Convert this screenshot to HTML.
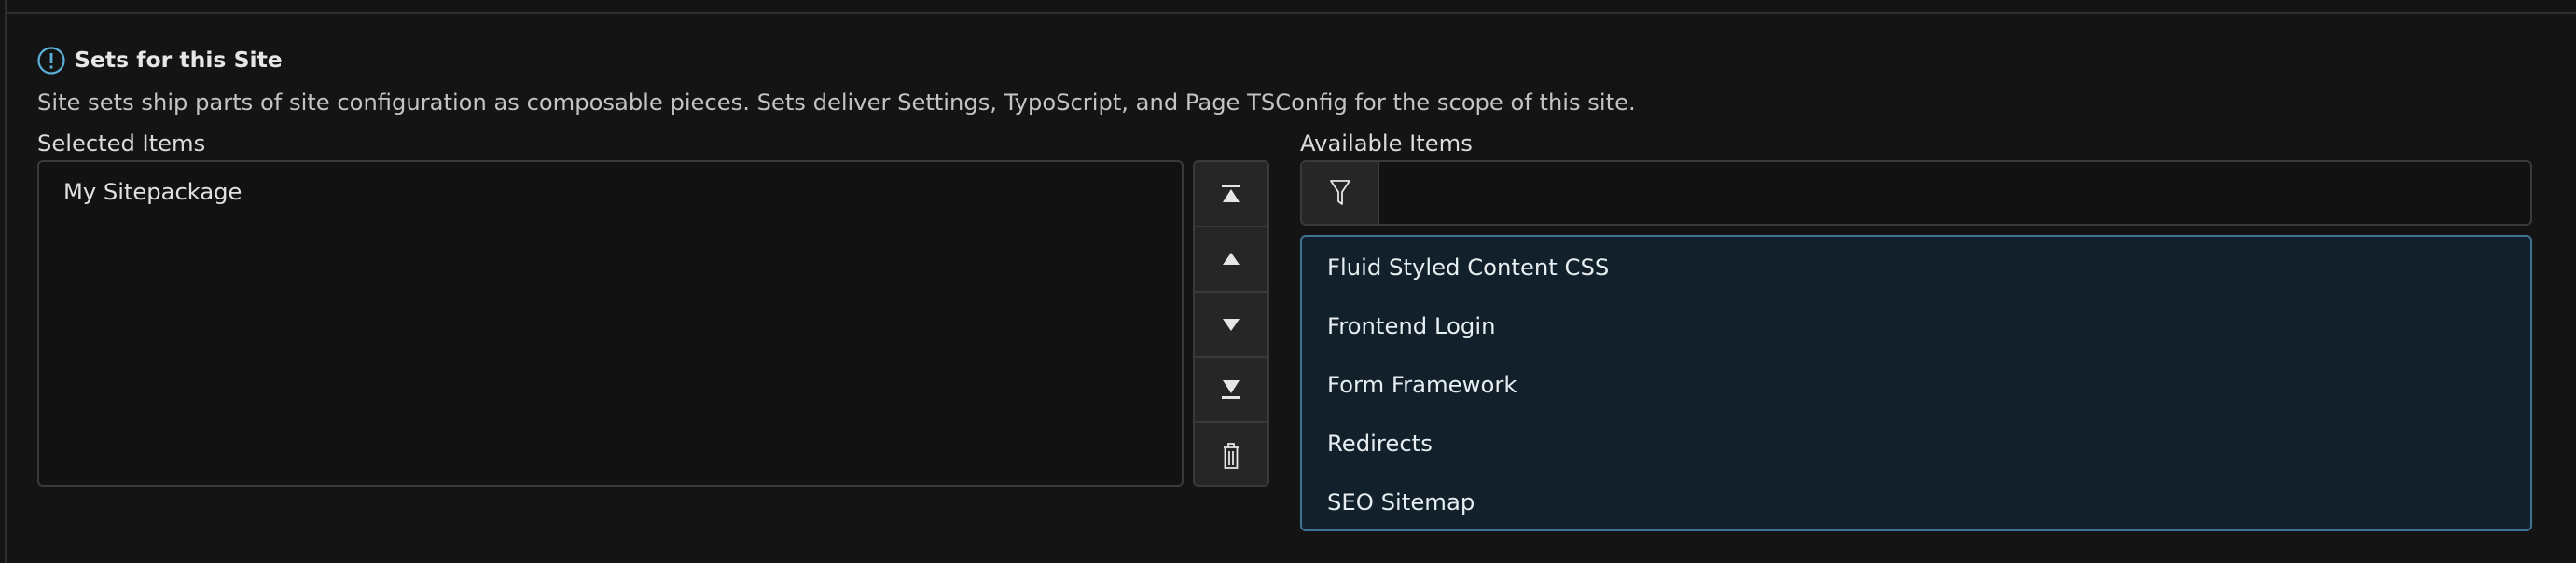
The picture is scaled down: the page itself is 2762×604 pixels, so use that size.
<!DOCTYPE html>
<html><head><style>
*{box-sizing:border-box;margin:0;padding:0}
body{width:2762px;height:604px;background:#141414;font-family:"DejaVu Sans","Liberation Sans",sans-serif;color:#d8d8d8;font-size:24.2px;position:relative;overflow:hidden}
.a{position:absolute}
.vl{left:5px;top:0;width:2px;height:604px;background:#2e2e2e}
.hl{left:5px;top:13px;width:2757px;height:2px;background:#2e2e2e}
.t{left:80px;top:50px;font-weight:bold;font-size:23.5px;color:#e6e6e6}
.d{left:40px;top:96px;color:#c4c4c4;white-space:nowrap}
.lb{top:140px;color:#dcdcdc}
.box{left:40px;top:172px;width:1229px;height:350px;border:2px solid #3a3a3a;border-radius:6px;background:#121212}
.btns{left:1279px;top:172px;width:82px;height:350px;border:2px solid #3a3a3a;border-radius:6px;background:#262626;overflow:hidden}
.btn{height:70px;border-bottom:2px solid #3a3a3a;display:flex;align-items:center;justify-content:center}
.btn:last-child{border-bottom:none}
.inp{left:1394px;top:172px;width:1321px;height:70px;border:2px solid #3a3a3a;border-radius:6px;background:#121212;overflow:hidden}
.fb{position:absolute;left:0;top:0;width:83px;height:100%;background:#262626;border-right:2px solid #3a3a3a;display:flex;align-items:center;justify-content:center}
.list{left:1394px;top:252px;width:1321px;height:318px;border:2px solid #3d7393;border-radius:6px;background:#11202a;color:#e6eef2}
.it{position:absolute;left:27px;font-size:24.3px}
</style></head><body>
<div class="a vl"></div><div class="a hl"></div>
<svg class="a" style="left:40px;top:50px" width="30" height="30" viewBox="0 0 30 30"><circle cx="15" cy="15" r="13.5" fill="none" stroke="#5ab0d8" stroke-width="2.2"/><rect x="13.6" y="7" width="2.8" height="11" fill="#5ab0d8"/><rect x="13.6" y="20.5" width="2.8" height="3" fill="#5ab0d8"/></svg>
<div class="a t">Sets for this Site</div>
<div class="a d">Site sets ship parts of site configuration as composable pieces. Sets deliver Settings, TypoScript, and Page TSConfig for the scope of this site.</div>
<div class="a lb" style="left:40px">Selected Items</div>
<div class="a lb" style="left:1394px">Available Items</div>
<div class="a box"><div style="position:absolute;left:26px;top:18px;color:#e0e0e0">My Sitepackage</div></div>
<div class="a btns">
<div class="btn"><svg width="22" height="22" viewBox="0 0 22 22"><rect x="1" y="1" width="20" height="3" fill="#e6e6e6"/><path d="M11 6 L20 20 L2 20Z" fill="#e6e6e6"/></svg></div>
<div class="btn"><svg width="22" height="16" viewBox="0 0 22 16"><path d="M11 1 L20 14 L2 14Z" fill="#e6e6e6"/></svg></div>
<div class="btn"><svg width="22" height="16" viewBox="0 0 22 16"><path d="M2 2 L20 2 L11 15Z" fill="#e6e6e6"/></svg></div>
<div class="btn"><svg width="22" height="22" viewBox="0 0 22 22"><path d="M2 1 L20 1 L11 15Z" fill="#e6e6e6"/><rect x="1" y="18" width="20" height="3" fill="#e6e6e6"/></svg></div>
<div class="btn"><svg width="22" height="30" viewBox="0 0 22 30"><path d="M3 6 H19 M8 6 V2 H14 V6 M4.5 6 V28 H17.5 V6 M9 10 V25 M13 10 V25" fill="none" stroke="#e6e6e6" stroke-width="1.8"/></svg></div>
</div>
<div class="a inp"><div class="fb"><svg width="22" height="30" viewBox="0 0 22 30"><path d="M1 2 H21 L13 14 V27 L9 24 V14 Z" fill="none" stroke="#e6e6e6" stroke-width="1.8" stroke-linejoin="round"/></svg></div></div>
<div class="a list">
<div class="it" style="top:18px">Fluid Styled Content CSS</div>
<div class="it" style="top:81px">Frontend Login</div>
<div class="it" style="top:144px">Form Framework</div>
<div class="it" style="top:207px">Redirects</div>
<div class="it" style="top:270px">SEO Sitemap</div>
</div>
</body></html>
